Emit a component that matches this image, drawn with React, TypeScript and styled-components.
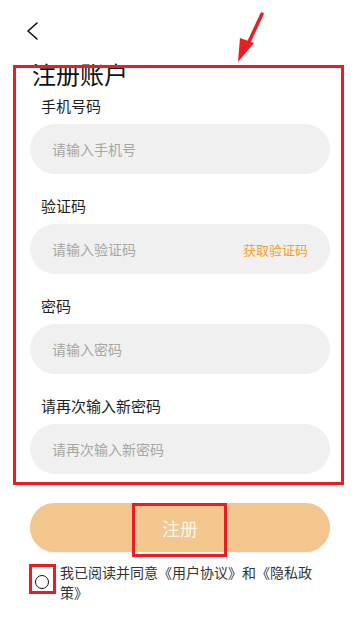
import React from "react"
import styled, { createGlobalStyle } from "styled-components"

const GlobalStyle = createGlobalStyle`
    html, body {
        margin: 0;
        padding: 0;
        background: #ffffff;
    }
    * {
        box-sizing: border-box;
    }
    body {
        font-family: "Noto Sans CJK SC", "Noto Sans", sans-serif;
        color: #222222;
    }
`

const Page = styled.div`
    position: relative;
    width: 360px;
    height: 621px;
    overflow: hidden;
    background: #ffffff;
`

const TopBar = styled.div`
    display: flex;
    align-items: flex-start;
    height: 59px;
    padding: 22px 0 0 26px;
`

const BackButton = styled.button`
    border: none;
    background: none;
    padding: 0;
    width: 14px;
    height: 18px;
    cursor: pointer;
`

const Title = styled.h1`
    margin: 0 0 7px 32px;
    font-size: 24px;
    font-weight: 400;
    line-height: 30px;
    color: #111111;
`

const Form = styled.div`
    display: flex;
    flex-direction: column;
    gap: 22px;
    padding: 0 30px;
`

const Field = styled.div`
    display: flex;
    flex-direction: column;
    gap: 8px;
`

const Label = styled.label`
    padding-left: 11px;
    font-size: 15px;
    line-height: 20px;
    color: #1e1e1e;
`

const InputShell = styled.div`
    display: flex;
    align-items: center;
    justify-content: space-between;
    height: 50px;
    padding: 0 22px 0 20px;
    border-radius: 25px;
    background: #f0f0f0;
`

const Input = styled.input`
    flex: 1;
    min-width: 0;
    border: none;
    background: transparent;
    outline: none;
    font-family: inherit;
    font-size: 14px;
    color: #333333;
    &::placeholder {
        color: #a6a6a6;
    }
`

const CodeLink = styled.span`
    font-size: 13px;
    color: #f5a02a;
`

const SubmitButton = styled.button`
    display: flex;
    align-items: center;
    justify-content: center;
    width: 300px;
    height: 49px;
    margin: 29px 0 0 30px;
    border: none;
    border-radius: 25px;
    background: #f2c68c;
    color: #fdf6ec;
    font-family: inherit;
    font-size: 18px;
    box-shadow: 0 1px 2px rgba(0, 0, 0, 0.06);
`

const Agreement = styled.div`
    display: flex;
    align-items: center;
    gap: 11px;
    margin-top: 10px;
    padding-left: 35px;
`

const Radio = styled.span`
    flex: none;
    width: 14px;
    height: 14px;
    border: 1.6px solid #111111;
    border-radius: 50%;
`

const AgreementText = styled.p`
    margin: 0;
    width: 262px;
    font-size: 14px;
    line-height: 20px;
    color: #333333;
`

const Mark = styled.div<{ $x: number; $y: number; $w: number; $h: number }>`
    position: absolute;
    left: ${({ $x }) => $x}px;
    top: ${({ $y }) => $y}px;
    width: ${({ $w }) => $w}px;
    height: ${({ $h }) => $h}px;
    border: 3.5px solid #ec1c24;
    pointer-events: none;
`

const Arrow = styled.svg`
    position: absolute;
    left: 230px;
    top: 8px;
    pointer-events: none;
`

const fields = [
    { label: "手机号码", placeholder: "请输入手机号" },
    { label: "验证码", placeholder: "请输入验证码", code: true },
    { label: "密码", placeholder: "请输入密码" },
    { label: "请再次输入新密码", placeholder: "请再次输入新密码" }
]

export default function App() {
    return (
        <Page>
            <GlobalStyle />
            <TopBar>
                <BackButton aria-label="返回">
                    <svg width="14" height="18" viewBox="0 0 14 18">
                        <polyline
                            points="11,1 2,9 11,17"
                            fill="none"
                            stroke="#111"
                            strokeWidth="1.6"
                            strokeLinecap="round"
                            strokeLinejoin="round"
                        />
                    </svg>
                </BackButton>
            </TopBar>
            <Title>注册账户</Title>
            <Form>
                {fields.map(f => (
                    <Field key={f.label}>
                        <Label>{f.label}</Label>
                        <InputShell>
                            <Input placeholder={f.placeholder} />
                            {f.code && <CodeLink>获取验证码</CodeLink>}
                        </InputShell>
                    </Field>
                ))}
            </Form>
            <SubmitButton>注册</SubmitButton>
            <Agreement>
                <Radio />
                <AgreementText>我已阅读并同意《用户协议》和《隐私政策》</AgreementText>
            </Agreement>

            <Mark $x={13} $y={65} $w={331} $h={420} />
            <Mark $x={132} $y={503} $w={95} $h={54} />
            <Mark $x={29} $y={564} $w={27} $h={30} />
            <Arrow width="40" height="60" viewBox="0 0 40 60">
                <line x1="32" y1="6" x2="18" y2="36" stroke="#ec1c24" strokeWidth="3.5" strokeLinecap="round" />
                <polygon points="8,54 10,30 24,35" fill="#ec1c24" />
            </Arrow>
        </Page>
    )
}
